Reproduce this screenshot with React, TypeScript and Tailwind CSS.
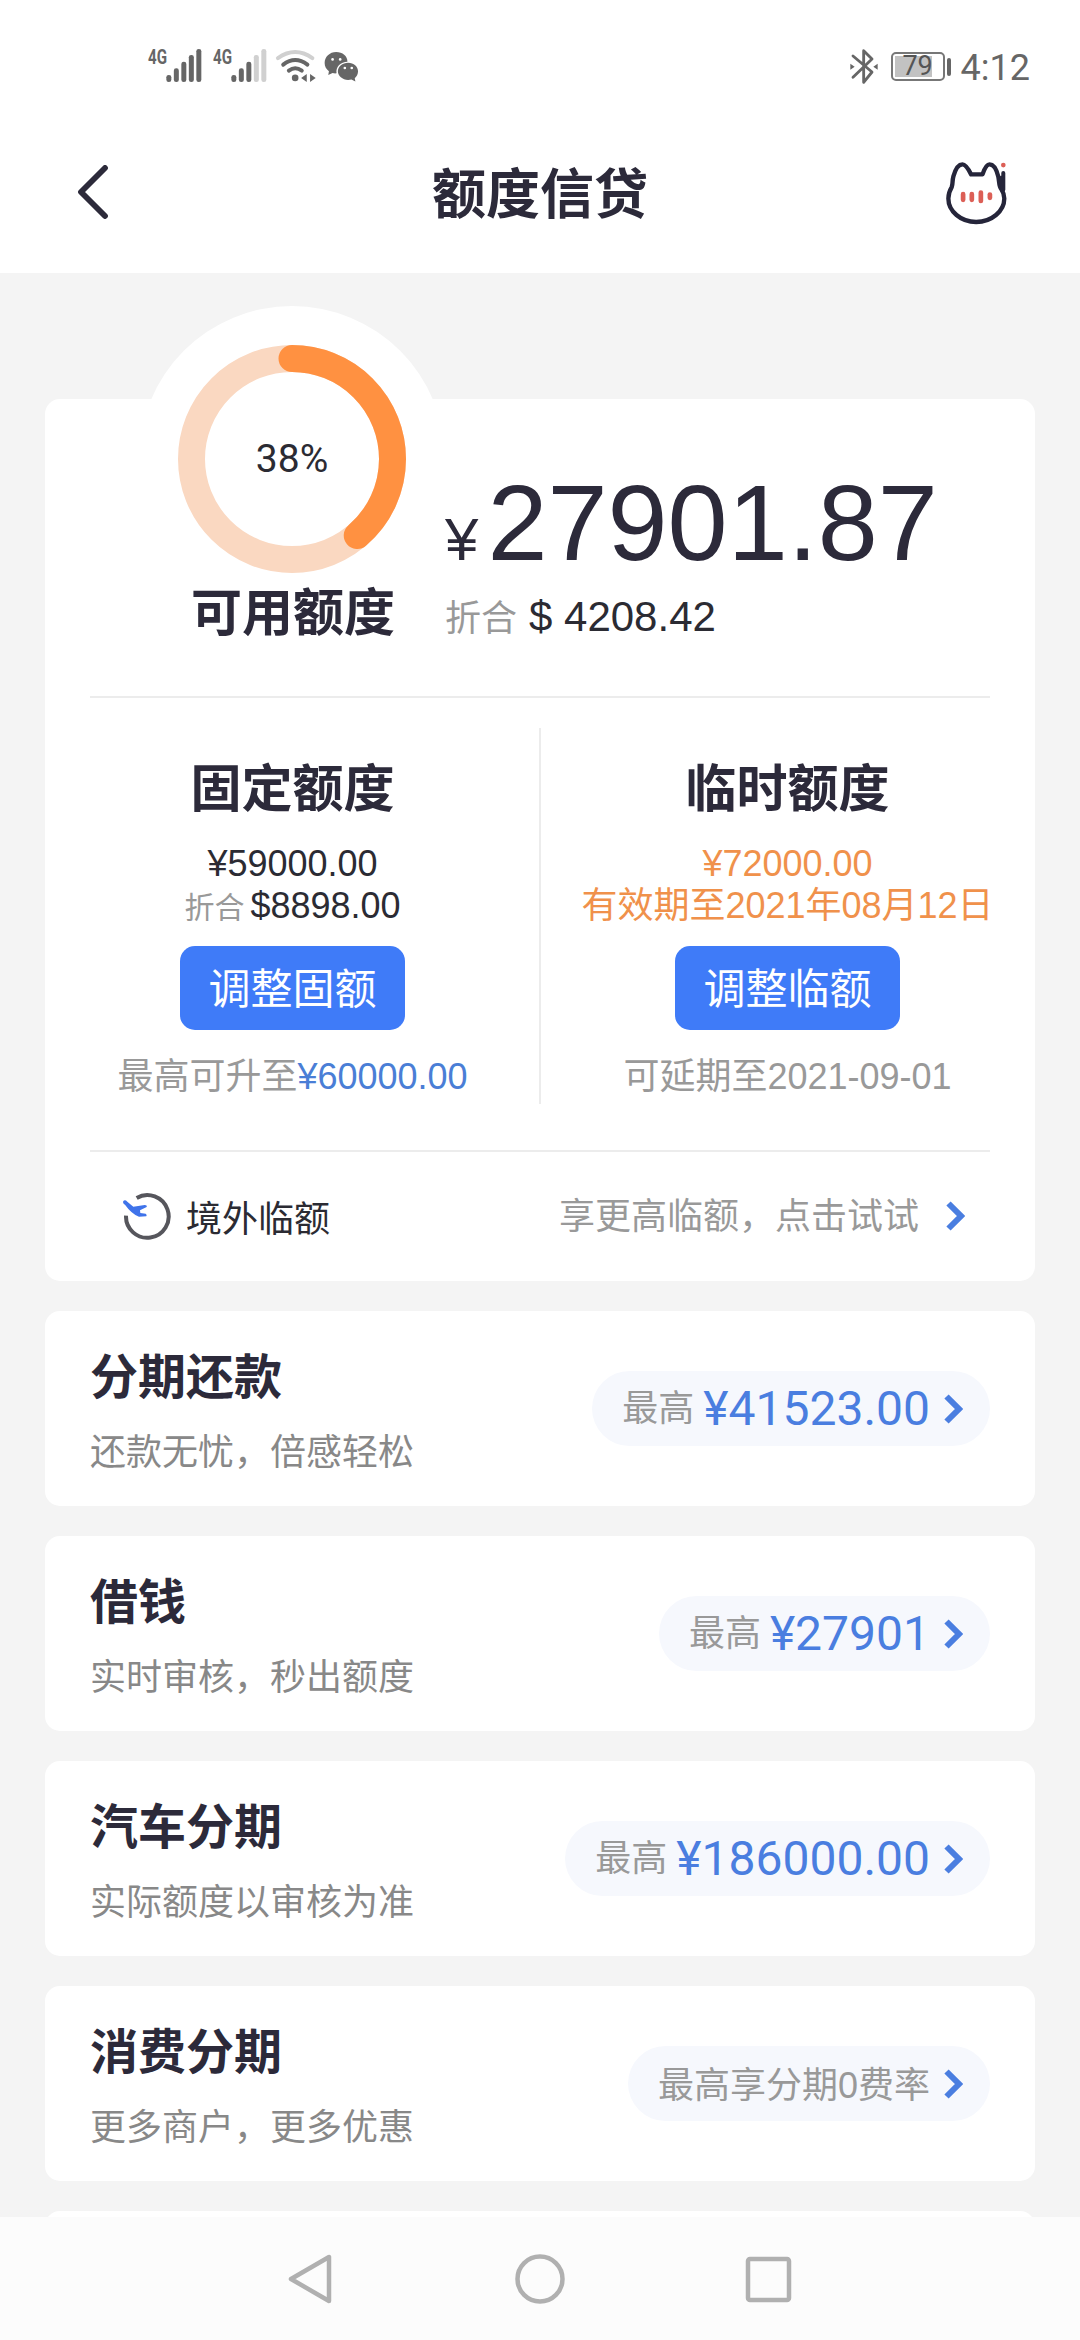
import React from 'react';

interface LoanItem {
  title: string;
  desc: string;
  label: string;
  amount?: string;
}

const loanItems: LoanItem[] = [
  { title: '分期还款', desc: '还款无忧，倍感轻松', label: '最高', amount: '¥41523.00' },
  { title: '借钱', desc: '实时审核，秒出额度', label: '最高', amount: '¥27901' },
  { title: '汽车分期', desc: '实际额度以审核为准', label: '最高', amount: '¥186000.00' },
  { title: '消费分期', desc: '更多商户，更多优惠', label: '最高享分期0费率' },
];

function Signal({ level }: { level: number }) {
  const tops = [135, 115, 95, 75, 57];
  return (
    <svg viewBox="50 0 165 210" className="h-[70px] w-[55px]">
      <text x="53" y="102" fontSize="63" fontWeight="700" fill="#666" textLength="57" lengthAdjust="spacingAndGlyphs">
        4G
      </text>
      {tops.map((top, i) => (
        <rect key={i} x={108 + i * 22.5} y={top} width="15" height={156 - top} rx="7" fill={i < level ? '#666' : '#d0d0d0'} />
      ))}
    </svg>
  );
}

function StatusBar() {
  return (
    <div className="flex h-[130px] items-start justify-between pt-[30px] font-['Roboto','Noto_Sans_CJK_SC',sans-serif]">
      <div className="flex pl-[147px]">
        <Signal level={5} />
        <div className="w-[10px]" />
        <Signal level={3} />
        <svg viewBox="410 0 160 210" className="ml-[-0.5px] h-[70px] w-[53px]" fill="none" strokeWidth="12" strokeLinecap="round">
          <path d="M443 84 Q495 48 547 84" stroke="#d0d0d0" />
          <path d="M459 104 Q495 76 532 104" stroke="#666" />
          <path d="M476 122 Q495 108 515 122" stroke="#666" />
          <circle cx="495" cy="144" r="10" fill="#666" />
          <path d="M530 132v24l-17-12zM540 132v24l17-12z" fill="#666" />
        </svg>
        <svg viewBox="570 0 130 210" className="h-[70px] w-[43px]" fill="#666">
          <path d="M619 66c-20 0-35 15-35 33 0 10 5 19 13 25l-2 11 13-6c4 1 8 2 12 1-3-20 13-35 33-35 0-17-15-29-34-29z" />
          <path d="M655 98c-17 0-31 12-31 26s14 26 31 26c4 0 7 0 10-1l12 6-2-10c6-5 10-12 10-21 0-14-13-26-30-26z" />
          <g fill="#fff">
            <circle cx="608" cy="88" r="4" />
            <circle cx="631" cy="88" r="4" />
            <circle cx="645" cy="114" r="4" />
            <circle cx="666" cy="114" r="4" />
          </g>
        </svg>
      </div>
      <div className="flex pr-[50px]">
        <svg viewBox="50 0 90 210" className="mr-px h-[70px] w-[30px]" fill="none" stroke="#666" strokeWidth="8.5" strokeLinejoin="round" strokeLinecap="round">
          <path d="M62 78l57 48-25 31V62l25 25-57 55" />
          <path d="M54 101v18l13-9zM136 101v18l-13-9z" fill="#666" stroke="none" />
        </svg>
        <div className="mt-[22px] ml-[11px] flex h-[29px] items-center">
          <div className="relative flex h-[29px] w-[54px] items-center justify-center rounded-[5px] border-2 border-[#777] text-[27px] leading-none text-[#555]">
            <span className="absolute top-[2px] left-[2px] h-[21px] w-[37px] bg-[#c2c2c2]" />
            <span className="relative">79</span>
          </div>
          <div className="ml-[2px] h-[18px] w-1 rounded-sm bg-[#666]" />
        </div>
        <span className="mt-[17px] ml-[10px] text-[36px] leading-[42px] text-[#666]">4:12</span>
      </div>
    </div>
  );
}

function CatIcon() {
  return (
    <svg viewBox="66 54 200 200" className="h-[67px] w-[67px]" fill="none" strokeLinecap="round" strokeLinejoin="round">
      <path
        d="M150 100h34c6-18 12-30 21-30 14 0 22 20 26 36 4 18 1 28 9 38 4 6 9 18 9 28 0 38-38 70-84 70s-83-32-83-70c0-12 4-24 10-34 4-10 1-18 5-32 5-18 14-36 27-36 10 0 18 14 26 30z"
        stroke="#25253a"
        strokeWidth="13"
      />
      <path d="M246 96v50M240 110l4 40" stroke="#25253a" strokeWidth="12" />
      <circle cx="246" cy="72" r="7" fill="#dc5f56" />
      <g stroke="#dc5f56" strokeWidth="14">
        <path d="M126 159v17M152 159v17M179 154v25" />
        <path d="M206 160v10" />
      </g>
    </svg>
  );
}

function Chevron() {
  return (
    <svg viewBox="0 0 19 30" className="h-[30px] w-[19px] shrink-0" fill="none" stroke="#4a7ee0" strokeWidth="6">
      <path d="M2.5 2.5L15 15 2.5 27.5" />
    </svg>
  );
}

function Ring({ used, total }: { used: number; total: number }) {
  const percent = (used / total) * 100;
  return (
    <div className="absolute top-[-93px] left-[94px] flex size-[306px] items-center justify-center rounded-full bg-white">
      <svg viewBox="0 0 228 228" className="absolute size-[228px] -rotate-90" fill="none" strokeWidth="27">
        <circle cx="114" cy="114" r="100.5" stroke="#fad8c1" />
        <circle
          cx="114"
          cy="114"
          r="100.5"
          stroke="#ff9141"
          strokeLinecap="round"
          pathLength="100"
          strokeDasharray={`${percent} 100`}
        />
      </svg>
      <span className="relative font-['Roboto',sans-serif] text-[39px] text-[#2b2b33]">{Math.floor(percent)}%</span>
    </div>
  );
}

function QuotaCard() {
  return (
    <section className="relative flex h-[882px] shrink-0 flex-col rounded-[15px] bg-white px-[45px]">
      <Ring used={27901.87} total={72000} />
      <div className="relative flex h-[297px]">
        <div className="mt-[177px] w-[355px] shrink-0 pl-[101px] text-[51px] leading-[76px] font-bold">可用额度</div>
        <div className="pt-[64px]">
          <div className="flex items-baseline leading-[120px]">
            <span className="text-[60px]">¥</span>
            <span className="ml-[9px] text-[108px]">27901.87</span>
          </div>
          <div className="-mt-[9px] flex items-baseline leading-[52px]">
            <span className="text-[36px] text-[#999]">折合</span>
            <span className="ml-[12px] text-[42px] text-[#2b2b33]">$ 4208.42</span>
          </div>
        </div>
      </div>
      <div className="h-[2px] bg-[#ececec]" />
      <div className="-mx-[45px] mt-[30px] flex h-[376px]">
        <div className="flex flex-1 flex-col items-center">
          <h2 className="mt-[24px] text-[51px] leading-[76px] font-bold">固定额度</h2>
          <p className="mt-[15px] text-[36px] leading-[42px] text-[#2b2b33]">¥59000.00</p>
          <p className="flex h-[42px] items-baseline text-[36px] leading-[42px] text-[#2b2b33]">
            <span className="mr-[6px] text-[30px] text-[#999]">折合</span>$8898.00
          </p>
          <button className="mt-[19px] h-[84px] w-[225px] rounded-[15px] bg-[#3f7bf8] pt-[2px] text-[42px] text-white">调整固额</button>
          <p className="mt-[26px] text-[36px] leading-[42px] text-[#999]">
            最高可升至<span className="text-[#4a7ed6]">¥60000.00</span>
          </p>
        </div>
        <div className="-mx-px w-[2px] bg-[#ececec]" />
        <div className="flex flex-1 flex-col items-center">
          <h2 className="mt-[24px] text-[51px] leading-[76px] font-bold">临时额度</h2>
          <p className="mt-[15px] text-[36px] leading-[42px] text-[#f0914b]">¥72000.00</p>
          <p className="h-[42px] text-[36px] leading-[42px] whitespace-nowrap text-[#f0914b]">有效期至2021年08月12日</p>
          <button className="mt-[19px] h-[84px] w-[225px] rounded-[15px] bg-[#3f7bf8] pt-[2px] text-[42px] text-white">调整临额</button>
          <p className="mt-[26px] text-[36px] leading-[42px] text-[#999]">可延期至2021-09-01</p>
        </div>
      </div>
      <div className="mt-[46px] h-[2px] bg-[#ececec]" />
      <div className="flex h-[128px] items-center pr-[25px] pl-[32px]">
        <svg viewBox="66 62 150 150" className="h-[50px] w-[50px]" fill="none">
          <path d="M110 83a64 64 0 1 1-32 53" stroke="#56565c" strokeWidth="12" />
          <path d="M70 92q5-5 12 2l18 15 34-5q8 0 6 6l-20 10 1 8 16 2q5 3 2 8l-22 1q-22-8-42-36-8-4-5-11z" fill="#3f73ea" />
        </svg>
        <span className="mt-[7px] ml-[14px] text-[36px] text-[#2b2b33]">境外临额</span>
        <span className="mt-px ml-auto text-[36px] text-[#999]">享更高临额，点击试试</span>
        <div className="ml-[27px] flex">
          <Chevron />
        </div>
      </div>
    </section>
  );
}

function LoanCard({ item }: { item: LoanItem }) {
  return (
    <section className="flex h-[195px] shrink-0 items-center justify-between rounded-[15px] bg-white px-[45px]">
      <div className="pt-[5px]">
        <h3 className="text-[48px] leading-[72px] font-bold">{item.title}</h3>
        <p className="mt-[12px] text-[36px] leading-[54px] text-[#888]">{item.desc}</p>
      </div>
      <div className="flex h-[75px] items-center rounded-full bg-[#f6f8fd] pr-[27px] pl-[30px]">
        {item.amount ? (
          <>
            <span className="text-[36px] text-[#999]">{item.label}</span>
            <span className="ml-[9px] font-['Roboto',sans-serif] text-[48px] text-[#4a7ee0]">{item.amount}</span>
          </>
        ) : (
          <span className="mt-[5px] text-[36px] text-[#999]">{item.label}</span>
        )}
        <div className="ml-[14px] flex">
          <Chevron />
        </div>
      </div>
    </section>
  );
}

function NavBar() {
  return (
    <nav className="relative flex h-[123px] shrink-0 items-center justify-center gap-[178px] bg-[#fcfcfc]">
      <svg viewBox="0 0 50 50" className="size-[50px]" fill="none" stroke="#b0b0b0" strokeWidth="4.5" strokeLinejoin="round">
        <path d="M42 3v44L4 25z" />
      </svg>
      <svg viewBox="0 0 50 50" className="size-[50px]" fill="none" stroke="#b0b0b0" strokeWidth="4.5">
        <circle cx="25" cy="25" r="22.5" />
      </svg>
      <svg viewBox="0 0 50 50" className="size-[50px]" fill="none" stroke="#b0b0b0" strokeWidth="4.5">
        <rect x="5" y="5" width="41" height="41" rx="2" />
      </svg>
    </nav>
  );
}

export default function App() {
  return (
    <div className="flex h-[2340px] w-[1080px] flex-col overflow-hidden bg-[#f4f4f4] font-['Liberation_Sans','Noto_Sans_CJK_SC',sans-serif] text-[#2c2a3a]">
      <header className="h-[273px] shrink-0 bg-white">
        <StatusBar />
        <div className="flex h-[124px] items-center px-[70px]">
          <div className="flex flex-1">
            <svg viewBox="0 0 34 54" className="ml-[7px] h-[54px] w-[34px]" fill="none" stroke="#2c2a3a" strokeWidth="5.8" strokeLinecap="round" strokeLinejoin="round">
              <path d="M28 3L4 27l24 24" />
            </svg>
          </div>
          <h1 className="pt-[6px] text-[54px] font-bold">额度信贷</h1>
          <div className="flex flex-1 justify-end">
            <CatIcon />
          </div>
        </div>
      </header>
      <main className="flex min-h-0 flex-1 flex-col gap-[30px] overflow-hidden px-[45px] pt-[126px]">
        <QuotaCard />
        {loanItems.map((item) => (
          <LoanCard key={item.title} item={item} />
        ))}
        <section className="h-[195px] shrink-0 rounded-[15px] bg-white" />
      </main>
      <NavBar />
    </div>
  );
}
